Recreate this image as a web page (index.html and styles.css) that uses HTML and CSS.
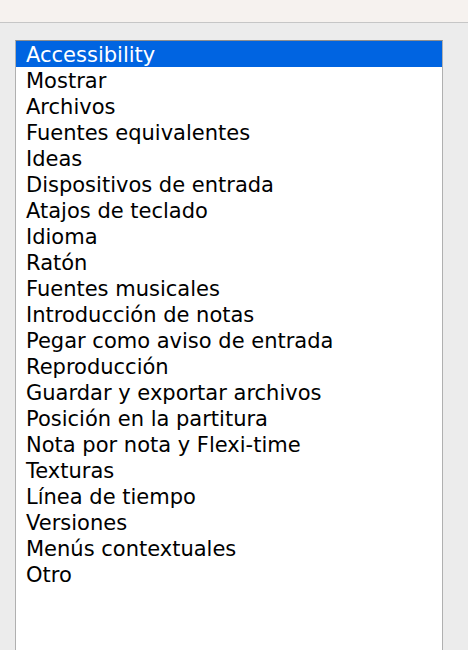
FILE: index.html
```html
<!DOCTYPE html>
<html lang="es">
<head>
<meta charset="utf-8">
<title>Preferencias</title>
<link rel="stylesheet" href="styles.css">
</head>
<body>
<div class="toolbar"></div>
<div class="content">
  <ul class="list">
    <li class="item selected">Accessibility</li>
    <li class="item">Mostrar</li>
    <li class="item">Archivos</li>
    <li class="item">Fuentes equivalentes</li>
    <li class="item">Ideas</li>
    <li class="item">Dispositivos de entrada</li>
    <li class="item">Atajos de teclado</li>
    <li class="item">Idioma</li>
    <li class="item">Ratón</li>
    <li class="item">Fuentes musicales</li>
    <li class="item">Introducción de notas</li>
    <li class="item">Pegar como aviso de entrada</li>
    <li class="item">Reproducción</li>
    <li class="item">Guardar y exportar archivos</li>
    <li class="item">Posición en la partitura</li>
    <li class="item">Nota por nota y Flexi-time</li>
    <li class="item">Texturas</li>
    <li class="item">Línea de tiempo</li>
    <li class="item">Versiones</li>
    <li class="item">Menús contextuales</li>
    <li class="item">Otro</li>
  </ul>
</div>
</body>
</html>
```
FILE: styles.css
```css
html, body {
  margin: 0;
  padding: 0;
  height: 100%;
  overflow: hidden;
}
body {
  background: #ececec;
  font-family: "DejaVu Sans", "Liberation Sans", sans-serif;
  display: flex;
  flex-direction: column;
}
.toolbar {
  height: 22px;
  background: #f6f2ef;
  border-bottom: 1px solid #c6c6c6;
  flex: none;
}
.content {
  flex: 1;
  padding: 17px 25px 0 15px;
  display: flex;
}
.list {
  list-style: none;
  margin: 0;
  padding: 0;
  flex: 1;
  background: #ffffff;
  border-top: 1px solid #8e8e8e;
  border-left: 1px solid #b0b0b0;
  border-right: 1px solid #b0b0b0;
}
.item {
  height: 26px;
  line-height: 28px;
  padding-left: 10px;
  font-size: 21px;
  color: #000000;
  white-space: nowrap;
  overflow: hidden;
}
.item.selected {
  background: #0064e1;
  color: #ffffff;
}
```
